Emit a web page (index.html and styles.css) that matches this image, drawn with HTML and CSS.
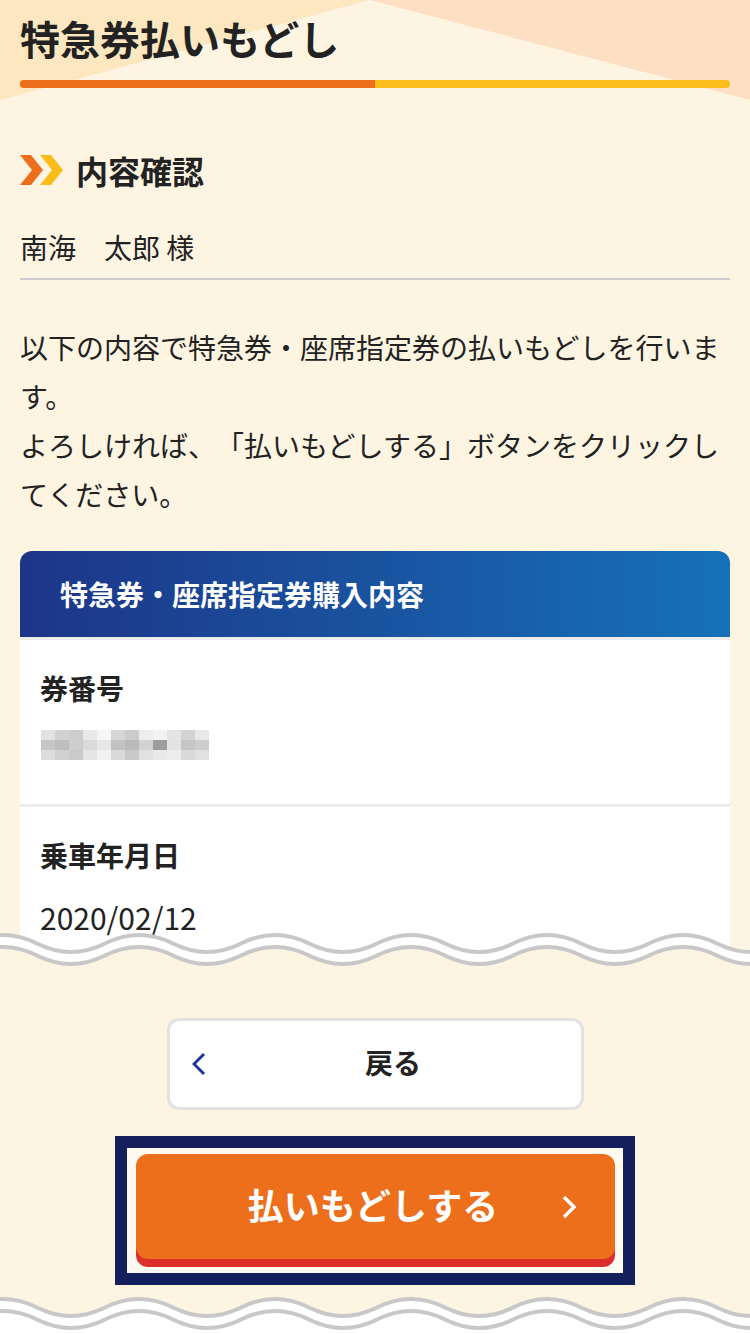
FILE: index.html
```html
<!DOCTYPE html>
<html lang="ja">
  <head>
    <meta charset="UTF-8" />
    <meta name="viewport" content="width=device-width, initial-scale=1.0" />
    <title>特急券払いもどし</title>

    <link rel="stylesheet" href="styles.css">
  </head>
  <body>
    <header class="page-head">
      <h1 class="page-title">特急券払いもどし</h1>
      <div class="progress"><span class="progress-done"></span></div>
    </header>

    <main class="content">
      <h2 class="section-title">
        <svg class="section-icon" viewBox="0 0 43 30" aria-hidden="true">
          <polygon class="chev-a" points="0,0 11,0 23,15 11,30 0,30 12,15" />
          <polygon class="chev-b" points="20,0 31,0 43,15 31,30 20,30 32,15" />
        </svg>
        内容確認
      </h2>

      <p class="customer">南海　太郎 様</p>

      <p class="lead">
        以下の内容で特急券・座席指定券の払いもどしを行います。<br>
        よろしければ、「払いもどしする」ボタンをクリックしてください。
      </p>

      <!-- preview of the ticket, cut off by the tear below -->
      <div class="excerpt">
        <section class="card">
          <h3 class="card-head">特急券・座席指定券購入内容</h3>
          <dl class="card-body">
            <div class="row">
              <dt>券番号</dt>
              <dd>
                <svg class="mosaic" viewBox="0 0 168 30" aria-label="券番号（非表示）">
                  <rect x="0" y="0" width="14" height="10" fill="#e2e2e2" />
                  <rect x="14" y="0" width="14" height="10" fill="#d2d2d2" />
                  <rect x="28" y="0" width="14" height="10" fill="#cdcdcd" />
                  <rect x="42" y="0" width="14" height="10" fill="#e9e9e9" />
                  <rect x="56" y="0" width="14" height="10" fill="#f6f6f6" />
                  <rect x="70" y="0" width="14" height="10" fill="#d6d6d6" />
                  <rect x="84" y="0" width="14" height="10" fill="#cbcbcb" />
                  <rect x="98" y="0" width="14" height="10" fill="#ededed" />
                  <rect x="112" y="0" width="14" height="10" fill="#f2f2f2" />
                  <rect x="126" y="0" width="14" height="10" fill="#e4e4e4" />
                  <rect x="140" y="0" width="14" height="10" fill="#d3d3d3" />
                  <rect x="154" y="0" width="14" height="10" fill="#e8e8e8" />
                  <rect x="0" y="10" width="14" height="10" fill="#c6c6c6" />
                  <rect x="14" y="10" width="14" height="10" fill="#bebebe" />
                  <rect x="28" y="10" width="14" height="10" fill="#cecece" />
                  <rect x="42" y="10" width="14" height="10" fill="#dadada" />
                  <rect x="56" y="10" width="14" height="10" fill="#e7e7e7" />
                  <rect x="70" y="10" width="14" height="10" fill="#c2c2c2" />
                  <rect x="84" y="10" width="14" height="10" fill="#bababa" />
                  <rect x="98" y="10" width="14" height="10" fill="#d2d2d2" />
                  <rect x="112" y="10" width="14" height="10" fill="#9d9d9d" />
                  <rect x="126" y="10" width="14" height="10" fill="#e3e3e3" />
                  <rect x="140" y="10" width="14" height="10" fill="#c5c5c5" />
                  <rect x="154" y="10" width="14" height="10" fill="#cdcdcd" />
                  <rect x="0" y="20" width="14" height="10" fill="#dddddd" />
                  <rect x="14" y="20" width="14" height="10" fill="#d1d1d1" />
                  <rect x="28" y="20" width="14" height="10" fill="#cacaca" />
                  <rect x="42" y="20" width="14" height="10" fill="#e5e5e5" />
                  <rect x="56" y="20" width="14" height="10" fill="#f1f1f1" />
                  <rect x="70" y="20" width="14" height="10" fill="#d9d9d9" />
                  <rect x="84" y="20" width="14" height="10" fill="#c9c9c9" />
                  <rect x="98" y="20" width="14" height="10" fill="#e1e1e1" />
                  <rect x="112" y="20" width="14" height="10" fill="#e9e9e9" />
                  <rect x="126" y="20" width="14" height="10" fill="#ededed" />
                  <rect x="140" y="20" width="14" height="10" fill="#d9d9d9" />
                  <rect x="154" y="20" width="14" height="10" fill="#e1e1e1" />
                </svg>
              </dd>
            </div>
            <div class="row">
              <dt>乗車年月日</dt>
              <dd class="num">2020/02/12</dd>
            </div>
          </dl>
        </section>
      </div>
    </main>

    <div class="tear" aria-hidden="true">
      <svg viewBox="0 0 750 40" preserveAspectRatio="none">
        <path class="tear-band" d="M -31 13.5 Q 3 -3.5 37 13.5 T 105 13.5 T 173 13.5 T 241 13.5 T 309 13.5 T 377 13.5 T 445 13.5 T 513 13.5 T 581 13.5 T 649 13.5 T 717 13.5 T 785 13.5 L 785 40 L -31 40 Z" />
        <path class="tear-below" d="M -31 25.5 Q 3 8.5 37 25.5 T 105 25.5 T 173 25.5 T 241 25.5 T 309 25.5 T 377 25.5 T 445 25.5 T 513 25.5 T 581 25.5 T 649 25.5 T 717 25.5 T 785 25.5 L 785 40 L -31 40 Z" />
        <path class="tear-line" d="M -31 13.5 Q 3 -3.5 37 13.5 T 105 13.5 T 173 13.5 T 241 13.5 T 309 13.5 T 377 13.5 T 445 13.5 T 513 13.5 T 581 13.5 T 649 13.5 T 717 13.5 T 785 13.5" />
        <path class="tear-line" d="M -31 25.5 Q 3 8.5 37 25.5 T 105 25.5 T 173 25.5 T 241 25.5 T 309 25.5 T 377 25.5 T 445 25.5 T 513 25.5 T 581 25.5 T 649 25.5 T 717 25.5 T 785 25.5" />
      </svg>
    </div>

    <div class="actions">
      <button class="btn-back" type="button">
        <svg viewBox="0 0 14 24" aria-hidden="true"><polyline points="12,2 2,12 12,22" /></svg>
        <span>戻る</span>
      </button>

      <div class="focus-ring">
        <button class="btn-refund" type="submit">
          <span>払いもどしする</span>
          <svg viewBox="0 0 14 24" aria-hidden="true"><polyline points="2,2 12,12 2,22" /></svg>
        </button>
      </div>
    </div>

    <div class="tear tear-end" aria-hidden="true">
      <svg viewBox="0 0 750 40" preserveAspectRatio="none">
        <path class="tear-band" d="M -31 13.5 Q 3 -3.5 37 13.5 T 105 13.5 T 173 13.5 T 241 13.5 T 309 13.5 T 377 13.5 T 445 13.5 T 513 13.5 T 581 13.5 T 649 13.5 T 717 13.5 T 785 13.5 L 785 40 L -31 40 Z" />
        <path class="tear-below" d="M -31 25.5 Q 3 8.5 37 25.5 T 105 25.5 T 173 25.5 T 241 25.5 T 309 25.5 T 377 25.5 T 445 25.5 T 513 25.5 T 581 25.5 T 649 25.5 T 717 25.5 T 785 25.5 L 785 40 L -31 40 Z" />
        <path class="tear-line" d="M -31 13.5 Q 3 -3.5 37 13.5 T 105 13.5 T 173 13.5 T 241 13.5 T 309 13.5 T 377 13.5 T 445 13.5 T 513 13.5 T 581 13.5 T 649 13.5 T 717 13.5 T 785 13.5" />
        <path class="tear-line" d="M -31 25.5 Q 3 8.5 37 25.5 T 105 25.5 T 173 25.5 T 241 25.5 T 309 25.5 T 377 25.5 T 445 25.5 T 513 25.5 T 581 25.5 T 649 25.5 T 717 25.5 T 785 25.5" />
      </svg>
    </div>
  </body>
</html>
```

FILE: styles.css
```css
:root {
  --cream: #fdf5e2;
  --orange: #ed6e1b;
  --yellow: #fbbd1c;
  --navy: #13205c;
  --blue: #1e3a8c;
  --ink: #222;
}

* {
  box-sizing: border-box;
}

body {
  margin: 0;
  font-family: "Noto Sans CJK JP", "Noto Sans", sans-serif;
  color: var(--ink);
  text-spacing-trim: space-all;
  background:
    linear-gradient(to bottom right, #fde7c0 50%, transparent 50%) left top / 370px 100px no-repeat,
    linear-gradient(to bottom left, #fde0c4 50%, transparent 50%) right top / 380px 100px no-repeat,
    var(--cream);
}

/* header */
.page-head {
  padding: 14px 20px 0;
}

.page-title {
  margin: 0;
  font-size: 40px;
  line-height: 48px;
  font-weight: 700;
}

.progress {
  margin-top: 18px;
  height: 8px;
  border-radius: 4px;
  background: var(--yellow);
  overflow: hidden;
}

.progress-done {
  display: block;
  width: 50%;
  height: 100%;
  background: var(--orange);
}

/* main */
.content {
  padding: 0 20px;
}

.section-title {
  margin: 62px 0 0;
  display: flex;
  align-items: center;
  gap: 13px;
  font-size: 32px;
  line-height: 40px;
  font-weight: 700;
}

.section-icon {
  width: 43px;
  height: 30px;
  flex: none;
}

.chev-a {
  fill: var(--orange);
}

.chev-b {
  fill: var(--yellow);
}

.customer {
  margin: 37px 0 0;
  padding-bottom: 11px;
  border-bottom: 2px solid #c9cbd0;
  font-size: 28px;
  line-height: 40px;
}

.lead {
  margin: 43px 0 0;
  font-size: 28px;
  line-height: 49px;
}

.excerpt {
  margin-top: 32px;
  height: 404px;
  overflow: hidden;
}

.card {
  background: #fff;
  border-radius: 12px 12px 0 0;
  overflow: hidden;
}

.card-head {
  margin: 0;
  height: 86px;
  padding: 0 40px;
  display: flex;
  align-items: center;
  color: #fff;
  font-size: 28px;
  font-weight: 700;
  background: linear-gradient(90deg, #1d3587, #1671b9);
}

.card-body {
  margin: 0;
}

.row {
  border-top: 3px solid #ececec;
  padding: 28px 20px 39px;
}

.row dt {
  font-size: 28px;
  line-height: 40px;
  font-weight: 700;
}

.row dd {
  margin: 22px 0 0;
  font-size: 28px;
  line-height: 40px;
}

.row .num {
  font-size: 30px;
}

.mosaic {
  display: block;
  width: 170px;
  height: 30px;
  margin: 5px 0;
}

/* torn edge */
.tear {
  position: relative;
  margin-top: -25px;
}

.tear svg {
  display: block;
  width: 100%;
  height: 40px;
}

.tear-band {
  fill: #fff;
}

.tear-below {
  fill: var(--cream);
}

.tear-line {
  fill: none;
  stroke: #c8c8c8;
  stroke-width: 4;
}

.tear-end {
  margin-top: 9px;
}

.tear-end .tear-below {
  fill: #fff;
}

/* buttons */
.actions {
  display: flex;
  flex-direction: column;
  align-items: center;
  padding-top: 48px;
}

.btn-back {
  display: flex;
  align-items: center;
  width: 417px;
  height: 92px;
  padding: 0 0 0 22px;
  border: 3px solid #e2e2e2;
  border-radius: 12px;
  background: #fff;
  color: var(--ink);
  font: inherit;
  font-size: 28px;
  font-weight: 700;
  line-height: 1;
}

.btn-back svg {
  width: 14px;
  height: 24px;
  flex: none;
  fill: none;
  stroke: var(--blue);
  stroke-width: 3;
}

.btn-back span {
  flex: 1;
  text-align: center;
  padding-bottom: 5px;
}

.focus-ring {
  margin-top: 26px;
  width: 520px;
  padding: 6px 8px 14px 9px;
  border: 12px solid var(--navy);
  background: #fffaf0;
}

.btn-refund {
  display: flex;
  align-items: center;
  width: 100%;
  height: 105px;
  padding: 0 39px 0 48px;
  border: 0;
  border-radius: 12px;
  background: var(--orange);
  box-shadow: 0 8px 0 #dc2f2c;
  color: #fff;
  font: inherit;
  font-size: 36px;
  font-weight: 700;
  line-height: 1;
}

.btn-refund span {
  flex: 1;
  text-align: center;
  padding-bottom: 6px;
}

.btn-refund svg {
  width: 14px;
  height: 24px;
  flex: none;
  fill: none;
  stroke: #fff;
  stroke-width: 3.5;
}
```
